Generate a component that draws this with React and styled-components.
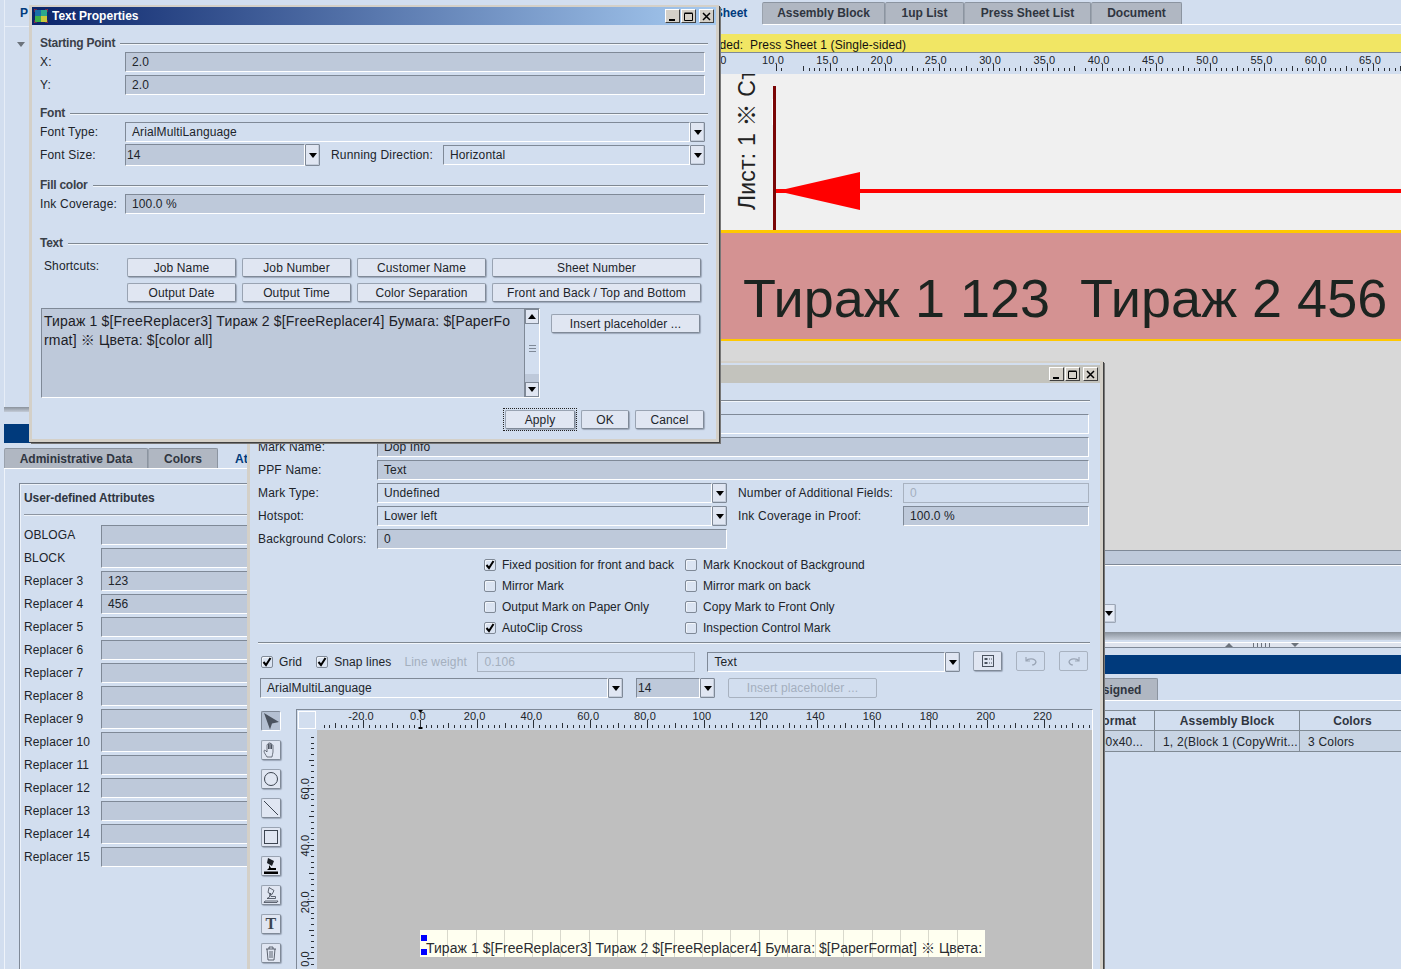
import React from "react";
import styled, { createGlobalStyle } from "styled-components";

const Global = createGlobalStyle`
  html, body { margin: 0; padding: 0; background: #d2deef; overflow: hidden; }
  * { box-sizing: border-box; }
  body { font-family: "Liberation Sans", "Noto Sans CJK SC", sans-serif; font-size: 12px; color: #20242a; letter-spacing: 0.12px; }
`;

const Desktop = styled.div`
  position: relative; width: 1401px; height: 969px; overflow: hidden; background: #d2deef;
  display: grid; grid-template-columns: 480px 921px;
`;

/* ---------- background application ---------- */
const LeftCol = styled.div`display: flex; flex-direction: column; height: 969px; overflow: hidden;`;
const RightCol = styled.div`display: flex; flex-direction: column; height: 969px; overflow: hidden;`;

const LeftTop = styled.div`
  height: 407px; margin-left: 4px; border-left: 1px solid #e6edf7; padding: 6px 0 0 15px; position: relative;
`;
const BlueLink = styled.div`font-weight: bold; color: #003a7c; height: 20px; line-height: 14px;`;
const HeadLine = styled.div`height: 1px; background: #e8eef8; margin: 0 0 15px -15px;`;
const Triangle = styled.div`
  width: 0; height: 0; margin-left: -3px;
  border-left: 4px solid transparent; border-right: 4px solid transparent; border-top: 5px solid #6c737c;
`;
const Shade = styled.div`
  height: ${p => p.$h || 6}px; margin-left: ${p => p.$ml || 0}px; flex: none;
  background: linear-gradient(#8a929c, #c4ccd8);
`;
const BlueBar = styled.div`
  height: 19px; background: #003a7c; margin-left: ${p => p.$ml || 0}px; margin-top: ${p => p.$mt || 0}px; flex: none;
`;
const TabRow = styled.div`
  display: flex; flex: none; height: ${p => p.$h}px; margin-top: ${p => p.$mt || 0}px; padding-left: ${p => p.$pl || 0}px;
  align-items: flex-end;
`;
const Tab = styled.div`
  width: ${p => p.$w}px; height: 100%; flex: none; font-weight: bold; letter-spacing: 0;
  text-align: ${p => p.$pad ? "left" : "center"}; padding-left: ${p => p.$pad || 0}px;
  line-height: ${p => p.$lh || 20}px; border: 1px solid #8b94a0; border-bottom: 0; border-left-color: #9aa2ad;
  border-radius: 2px 2px 0 0; background: ${p => p.$on ? "#d2deef" : "#b0b7c2"};
  color: ${p => p.$on ? "#003a7c" : "#2f3540"};
  ${p => p.$on ? "border-color: transparent;" : ""}
`;
const TabLine = styled.div`height: 1px; background: #fff; flex: none; margin-left: ${p => p.$ml || 0}px;`;

const LowerPane = styled.div`flex: 1; min-height: 0; margin-left: 4px; border-left: 1px solid #eef3fa; padding: 14px 0 0 14px;`;
const AttrBox = styled.div`
  border: 1px solid #7f8997; border-right: 0; border-bottom: 0; box-shadow: inset 1px 1px 0 #eef3fa; padding: 6px 0 0 4px; height: 500px;
`;
const AttrTitle = styled.div`font-weight: bold; color: #2f3540; line-height: 16px; height: 16px; letter-spacing: -0.1px;`;
const AttrSep = styled.div`height: 1px; background: #8d95a1; margin: 8px 0 10px 0; box-shadow: 0 1px 0 #eef3fa;`;
const AttrRow = styled.div`display: flex; align-items: center; height: 20px; margin-bottom: 3px;`;
const AttrLabel = styled.div`width: 77px; flex: none;`;

const Field = styled.div`
  height: ${p => p.$h || 20}px; width: ${p => p.$w ? p.$w + "px" : "auto"}; flex: ${p => p.$w ? "none" : 1};
  min-width: 0; border: 1px solid; border-color: #7f8997 #fff #fff #7f8997;
  padding-left: ${p => p.$pl ?? 6}px; line-height: ${p => (p.$h || 20) - 1}px; white-space: nowrap; overflow: hidden;
  background: ${p => p.$plain ? "#d2deef" : "#bec9da"}; color: ${p => p.$off ? "#a4afbe" : "#20242a"};
  ${p => p.$off ? "border-color: #a8b2c0;" : ""}
`;
const ArrowBox = styled.div`
  width: ${p => p.$w || 15}px; height: 100%; flex: none; display: flex; align-items: center; justify-content: center;
  background: #e0e6f2; border: 1px solid #7f8997; border-radius: 1px; box-shadow: inset -1px -1px 0 #c3ccda;
`;
const ArrowDown = styled.span`
  width: 0; height: 0; border-left: 4px solid transparent; border-right: 4px solid transparent; border-top: 5px solid #000;
`;
const ArrowUp = styled(ArrowDown)`border-top: 0; border-bottom: 5px solid #000;`;
const ComboWrap = styled.div`
  display: flex; height: ${p => p.$h || 20}px; width: ${p => p.$w ? p.$w + "px" : "auto"}; flex: ${p => p.$w ? "none" : 1}; min-width: 0;
  margin-left: ${p => p.$ml || 0}px;
`;
const Combo = ({ value, w, h, gray, pl, ml }) => (
  <ComboWrap $w={w} $h={h} $ml={ml}>
    <Field $plain={!gray} $h={h} $pl={pl}>{value}</Field>
    <ArrowBox><ArrowDown /></ArrowBox>
  </ComboWrap>
);

const Stage = styled.div`position: relative; height: 156px; background: #f0f0f0; overflow: hidden; flex: none;`;
const StageArt = styled.svg`display: block; width: 921px; height: 156px;`;
const Band = styled.div`
  flex: none; height: 111px; background: #d49292; border-top: 3px solid #ffc800; border-bottom: 2px solid #ffc800;
  padding-left: 263px; font-size: 54px; letter-spacing: 0; line-height: 131px; white-space: pre; overflow: hidden; color: #1c2420;
`;
const GrayPane = styled.div`height: 209px; background: #d8d8d8; flex: none;`;
const Strip = styled.div`height: 15px; flex: none; background: #bec9da; border-top: 1px solid #7f8997; border-bottom: 1px solid #7f8997;`;
const Yellow = styled.div`
  height: 19px; flex: none; margin-top: 9px; background: #f1e664; border-bottom: 1px solid #7f8997; padding-left: 219px; line-height: 22px; white-space: pre; color: #111;
`;
const RulerSvg = styled.svg`display: block; flex: none;`;
const SidePanel = styled.div`height: 67px; border-top: 1px solid #fff; padding: 38px 0 0 621px; flex: none;`;
const SmallArrow = styled(ArrowBox)`height: 19px; border-color: #9da7b6; background: #e4eaf5;`;
const SplitBar = styled.div`
  height: 6px; margin-top: 2px; flex: none; background: #dfe4ee; border-top: 1px solid #fff; border-bottom: 1px solid #7f8997;
  display: flex; justify-content: center; gap: 20px; align-items: center; padding-left: 642px;
`;
const MiniUp = styled.span`width: 0; height: 0; border-left: 4px solid transparent; border-right: 4px solid transparent; border-bottom: 4px solid #6c737c;`;
const MiniDown = styled(MiniUp)`border-bottom: 0; border-top: 4px solid #6c737c;`;
const Grip = styled.span`width: 18px; height: 4px; background: repeating-linear-gradient(90deg, #6c737c 0 1px, transparent 1px 4px);`;
const DataTable = styled.div`margin: 9px 0 0 597px; flex: none; display: grid; grid-template-columns: 78px 145px 106px; border-top: 1px solid #808a94;`;
const HeadCell = styled.div`
  height: 20px; line-height: 20px; text-align: center; font-weight: bold; color: #2f3540; border-right: 1px solid #808a94; border-bottom: 1px solid #808a94;
`;
const BodyCell = styled.div`
  height: 21px; line-height: 22px; padding-left: 8px; background: #c8d4e4; border-right: 1px solid #808a94; border-bottom: 1px solid #808a94; white-space: nowrap; overflow: hidden; letter-spacing: 0.2px;
`;

/* ---------- windows ---------- */
const Win = styled.div`
  position: absolute; left: ${p => p.$x}px; top: ${p => p.$y}px; width: ${p => p.$w}px; height: ${p => p.$h}px;
  background: #d2deef; border: 3px solid #d4d0c8; border-top-width: 2px; box-shadow: 1px 1px 0 #404040, 2px 2px 0 #777;
  display: flex; flex-direction: column; overflow: hidden;
`;
const TitleBar = styled.div`
  height: 18px; flex: none; display: flex; align-items: center; padding: 0 2px; gap: 4px; margin-top: ${p => p.$mt || 0}px;
  background: ${p => p.$active ? "linear-gradient(90deg, #0a246a, #a6caf0)" : "#c3c3bd"};
  color: #fff; font-weight: bold; font-size: 12px; letter-spacing: 0; white-space: nowrap;
`;
const TitleText = styled.div`flex: 1; overflow: hidden;`;
const WinBtn = styled.div`
  width: ${p => p.$w || 15}px; height: 14px; margin-left: ${p => p.$ml || 0}px; flex: none; background: #d4d0c8;
  border: 1px solid; border-color: #fff #404040 #404040 #fff; display: flex; align-items: center; justify-content: center;
`;
const WinBtnIcon = styled.svg`display: block; width: 9px; height: 9px;`;
const WinButtons = () => (
  <>
    <WinBtn><WinBtnIcon viewBox="0 0 9 9"><rect x="1" y="7" width="6" height="2" fill="#000" /></WinBtnIcon></WinBtn>
    <WinBtn $ml={-3}><WinBtnIcon viewBox="0 0 9 9"><path d="M0.5 1.5h8v7h-8z M0.5 1h8" fill="none" stroke="#000" /></WinBtnIcon></WinBtn>
    <WinBtn $ml={-1}><WinBtnIcon viewBox="0 0 9 9"><path d="M1 1l7 7M8 1l-7 7" stroke="#000" strokeWidth="1.5" /></WinBtnIcon></WinBtn>
  </>
);
const DlgBody = styled.div`flex: 1; padding: 0 11px 0 8px; display: flex; flex-direction: column; min-height: 0;`;
const SecHead = styled.div`
  display: flex; align-items: center; gap: 5px; height: 14px; margin-top: ${p => p.$mt}px; margin-bottom: 2px; margin-right: -3px;
  font-weight: bold; color: #3a4048; white-space: nowrap; letter-spacing: -0.25px;
`;
const SecLine = styled.div`flex: 1; height: 1px; background: #7f8892; box-shadow: 0 1px 0 #f2f6fb;`;
const FormRow = styled.div`display: flex; align-items: center; height: ${p => p.$h || 20}px; margin-bottom: ${p => p.$mb ?? 3}px; flex: none;`;
const FormLabel = styled.div`width: ${p => p.$w}px; margin-left: ${p => p.$ml || 0}px; flex: none; white-space: nowrap; letter-spacing: 0.18px; color: ${p => p.$off ? "#a4afbe" : "inherit"};`;
const ShortcutArea = styled.div`display: flex; margin: 6px 0 6px;`;
const ShortcutLabel = styled.div`width: 83px; margin-left: 4px; flex: none; padding-top: 1px;`;
const ShortcutGrid = styled.div`display: grid; grid-template-columns: 109px 109px 129px 209px; gap: 6px;`;
const Btn = styled.div`
  height: ${p => p.$h || 19}px; width: ${p => p.$w ? p.$w + "px" : "auto"}; margin-left: ${p => p.$ml || 0}px; margin-top: ${p => p.$mt || 0}px; flex: none;
  background: #e0e6f2; border: 1px solid #99a3b2; border-right-color: #7f8997; border-bottom-color: #7f8997; border-radius: 2px;
  box-shadow: 1px 1px 1px rgba(60, 70, 85, 0.35); text-align: center; line-height: ${p => (p.$h || 19) - 1}px; white-space: nowrap;
`;
const FocusBox = styled.div`outline: 1px dotted #222; outline-offset: 1px;`;
const OffBtn = styled(Btn)`box-shadow: none; background: #d2deef; border-color: #a8b2c0; color: #a4afbe;`;
const TextRow = styled.div`display: flex; align-items: flex-start; margin-left: 1px; flex: none;`;
const TextBox = styled.div`
  width: 499px; height: 90px; display: flex; background: #bec9da; border: 1px solid; border-color: #7f8997 #fff #fff #7f8997;
`;
const TextContent = styled.div`flex: 1; padding: 3px 2px; font-size: 14px; line-height: 19px; letter-spacing: 0.16px; white-space: pre; overflow: hidden; color: #1c2026;`;
const Scroll = styled.div`width: 15px; flex: none; display: flex; flex-direction: column; background: #d2deef; border-left: 1px solid #7f8997;`;
const ScrollBtn = styled.div`height: 15px; flex: none; background: #e0e6f2; border: 1px solid #7f8997; display: flex; align-items: center; justify-content: center;`;
const ScrollThumb = styled.div`flex: 1; display: flex; align-items: center; justify-content: center;`;
const ThumbGrip = styled.div`width: 7px; height: 9px; background: repeating-linear-gradient(#7f8997 0 1px, transparent 1px 3px);`;
const ScrollTrack = styled.div`height: 8px; flex: none; background: #bec9da;`;
const Footer = styled.div`display: flex; justify-content: flex-end; gap: 6px; margin: 12px 1px 0 0; flex: none;`;

/* mark window */
const MarkBody = styled.div`flex: 1; padding: 0 11px 0 8px; display: flex; flex-direction: column; min-height: 0;`;
const MarkTopLine = styled.div`height: 1px; margin: 17px -1px 13px 0; flex: none; background: #7f8892; box-shadow: 0 1px 0 #f2f6fb;`;
const CheckGrid = styled.div`
  display: grid; grid-template-columns: 201px 1fr; grid-auto-rows: 21px; padding: 3px 0 0 226px; flex: none; letter-spacing: 0.04px;
`;
const CheckItem = styled.label`display: flex; align-items: center; gap: 6px; white-space: nowrap; margin-left: ${p => p.$ml || 0}px; color: inherit;`;
const CheckSquare = styled.span`
  width: 12px; height: 12px; flex: none; border: 1px solid #7f8997; border-radius: 2px; background: #dbe4f2; display: flex; align-items: center; justify-content: center;
  box-shadow: inset 1px 1px 0 #f2f6fb;
`;
const CheckMark = styled.svg`display: block; width: 10px; height: 10px;`;
const Check = ({ on, label, ml }) => (
  <CheckItem $ml={ml}>
    <CheckSquare>
      {on && <CheckMark viewBox="0 0 10 10"><path d="M1.5 5l2.5 3 4.5-7" fill="none" stroke="#000" strokeWidth="2" /></CheckMark>}
    </CheckSquare>
    {label}
  </CheckItem>
);
const MarkSep = styled.div`height: 1px; flex: none; margin: 4px -1px 9px 0; background: #7f8892; box-shadow: 0 1px 0 #f2f6fb;`;
const ToolRow = styled.div`display: flex; align-items: center; height: 20px; flex: none; margin-bottom: ${p => p.$mb || 0}px;`;
const IconBtn = styled(Btn)`height: 20px; width: 29px; display: flex; align-items: center; justify-content: center; margin-top: -2px;`;
const OffIconBtn = styled(IconBtn)`background: #d2deef; box-shadow: none; border-color: #a8b2c0;`;
const CanvasRow = styled.div`display: flex; flex: 1; min-height: 0; margin-top: 11px;`;
const ToolCol = styled.div`display: flex; flex-direction: column; gap: 9px; width: 20px; margin: 2px 15px 0 3px; flex: none;`;
const ToolBtn = styled.div`
  width: 20px; height: 20px; flex: none; display: flex; align-items: center; justify-content: center;
  background: ${p => p.$on ? "#b4c0d2" : "#e0e6f2"}; border: 1px solid #99a3b2; border-right-color: #7f8997; border-bottom-color: #7f8997; border-radius: 2px;
  ${p => p.$on ? "border-color: #7f8997 #fff #fff #7f8997;" : "box-shadow: 1px 1px 1px rgba(60, 70, 85, 0.35);"}
  font: bold 16px "Liberation Serif", serif; color: #3c4450;
`;
const ToolIcon = styled.svg`display: block; width: 18px; height: 18px;`;
const RulerGrid = styled.div`
  flex: 1; margin-right: -3px; display: grid; grid-template-columns: 20px 1fr; grid-template-rows: 20px 1fr; min-height: 0;
  border-top: 1px solid #7f8997; border-left: 1px solid #7f8997; border-right: 1px solid #fff;
`;
const Corner = styled.div`background: #d2deef; border: 1px solid #fff; outline: 1px solid #d2deef; margin: 1px;`;
const GrayCanvas = styled.div`position: relative; background: #bfbfbf; overflow: hidden;`;
const TextStrip = styled.div`
  position: absolute; left: 103px; top: 200px; width: 565px; height: 27px; overflow: hidden; white-space: pre;
  padding-left: 6px; font-size: 14px; letter-spacing: 0.05px; line-height: 37px; color: #2a2c30;
  background: repeating-linear-gradient(90deg, #fffff0 0 27.3px, #d9d9cc 27.3px 28.3px);
`;
const Handle = styled.div`
  position: absolute; left: ${p => p.$x}px; top: ${p => p.$y}px; width: 6px; height: 6px; background: #0000ff;
`;

/* ---------- drawings ---------- */
const TK = "#2a2f36";
function TopRuler() {
  const ticks = [];
  for (let i = 0; i < 116; i++) {
    const x = 296 + 5.427 * i;
    const gap = (x > 302 && x < 323) || (x > 596 && x < 605);
    if (gap) continue;
    const h = i % 10 === 0 ? 7 : i % 5 === 0 ? 5 : 3;
    ticks.push(<line key={i} x1={Math.round(x) + 0.5} x2={Math.round(x) + 0.5} y1={18 - h} y2={18} stroke={TK} />);
  }
  const labels = [];
  for (let k = -1; k < 12; k++) {
    labels.push(<text key={k} x={293 + 54.27 * k} y={11} textAnchor="middle" fontSize="11" fill="#20242a" fontFamily="Liberation Sans">{(10 + 5 * k).toFixed(1)}</text>);
  }
  return <RulerSvg width="921" height="21" viewBox="0 0 921 21">{ticks}{labels}</RulerSvg>;
}
function MarkTopRuler() {
  const ticks = [];
  for (let i = -17; i < 120; i++) {
    const x = 103 + 5.67 * i;
    const h = i % 10 === 0 ? 8 : i % 5 === 0 ? 5 : 3;
    ticks.push(<line key={i} x1={Math.round(x) + 0.5} x2={Math.round(x) + 0.5} y1={18 - h} y2={18} stroke={TK} />);
  }
  const vals = ["-20.0", "0.0", "20.0", "40.0", "60.0", "80.0", "100", "120", "140", "160", "180", "200", "220"];
  const labels = vals.map((v, k) => (
    <text key={v} x={44 + 56.8 * k} y={10} textAnchor="middle" fontSize="11" fill="#20242a" fontFamily="Liberation Sans">{v}</text>
  ));
  return (
    <RulerSvg width="775" height="20" viewBox="0 0 775 20">
      {ticks}{labels}
      <path d="M101 0h5l-2.500 3zM101.500 17h4v2h-4z" fill="#000" />
    </RulerSvg>
  );
}
function MarkLeftRuler() {
  const ticks = [];
  for (let i = -1; i < 40; i++) {
    const y = 228 - 5.67 * i;
    const w = i % 10 === 0 ? 7 : i % 5 === 0 ? 5 : 3;
    ticks.push(<line key={i} x1={17 - w} x2={17} y1={Math.round(y) + 0.5} y2={Math.round(y) + 0.5} stroke={TK} />);
  }
  const labels = ["0.0", "20.0", "40.0", "60.0"].map((v, k) => {
    const y = 229 - 56.7 * k;
    return <text key={v} transform={`translate(12 ${y}) rotate(-90)`} textAnchor="middle" fontSize="11" fill="#20242a" fontFamily="Liberation Sans">{v}</text>;
  });
  return <RulerSvg width="20" height="240" viewBox="0 0 20 240">{ticks}{labels}</RulerSvg>;
}
const AppIcon = styled.svg`display: block; width: 14px; height: 14px; flex: none;`;
const TitleIcon = () => (
  <AppIcon viewBox="0 0 14 14">
    <rect x="1" y="1" width="6" height="6" fill="#1a6ea8" />
    <rect x="7" y="1" width="6" height="6" fill="#2ba88c" />
    <rect x="1" y="7" width="6" height="6" fill="#3cae4c" />
    <rect x="7" y="7" width="6" height="6" fill="#c8c83c" />
    <path d="M0 3V0h3M11 0h3v3M14 11v3h-3M3 14H0v-3" fill="none" stroke="#c03030" />
  </AppIcon>
);

const attrs = ["OBLOGA", "BLOCK", "Replacer 3", "Replacer 4", "Replacer 5", "Replacer 6", "Replacer 7", "Replacer 8", "Replacer 9", "Replacer 10", "Replacer 11", "Replacer 12", "Replacer 13", "Replacer 14", "Replacer 15"];
const attrVals = { "Replacer 3": "123", "Replacer 4": "456" };

const Tools = () => (
  <ToolCol>
    <ToolBtn $on><ToolIcon viewBox="0 0 18 18"><path d="M2 1l15 9-7 1.500-2 6z" fill="#4a525e" /></ToolIcon></ToolBtn>
    <ToolBtn><ToolIcon viewBox="0 0 18 18"><path d="M5 16c-1-2-3-4-3-6 0-1 1-1 2 0l1 1V4c0-1 1.500-1 1.500 0v4-5.500c0-1 1.500-1 1.500 0V8V3c0-1 1.500-1 1.500 0v5-3.500c0-1 1.500-1 1.500 0V11c0 2-1 3-1 5z" fill="none" stroke="#3c4450" strokeWidth="0.7" /></ToolIcon></ToolBtn>
    <ToolBtn><ToolIcon viewBox="0 0 18 18"><circle cx="9" cy="9" r="6.500" fill="none" stroke="#3c4450" /></ToolIcon></ToolBtn>
    <ToolBtn><ToolIcon viewBox="0 0 18 18"><path d="M2 2l14 14" stroke="#3c4450" /></ToolIcon></ToolBtn>
    <ToolBtn><ToolIcon viewBox="0 0 18 18"><rect x="2.500" y="2.500" width="13" height="13" fill="none" stroke="#3c4450" /></ToolIcon></ToolBtn>
    <ToolBtn><ToolIcon viewBox="0 0 18 18"><path d="M6 1l6 3-2 5-5-3z" fill="#1c2026" /><path d="M7 8l2 3h5v2H5l2-2z M2 14.500h14V17H2z" fill="#000" /></ToolIcon></ToolBtn>
    <ToolBtn><ToolIcon viewBox="0 0 18 18"><path d="M7 1.500l5 3-2 4-4-2z M8 7l1 3.500h4.500v2H5l2.500-1.500z M3 15h13l-1 1.500H2z" fill="none" stroke="#3c4450" strokeWidth="0.8" /></ToolIcon></ToolBtn>
    <ToolBtn>T</ToolBtn>
    <ToolBtn><ToolIcon viewBox="0 0 18 18"><path d="M4 5h10M7 5V3h4v2M5 5l1 11h6l1-11M8 7v7M10 7v7" fill="none" stroke="#3c4450" strokeWidth="0.8" /></ToolIcon></ToolBtn>
  </ToolCol>
);

export default function App() {
  return (
    <>
      <Global />
      <Desktop>
        <LeftCol>
          <LeftTop>
            <BlueLink>P</BlueLink>
            <HeadLine />
            <Triangle />
          </LeftTop>
          <Shade $ml={4} $h={5} />
          <BlueBar $ml={4} $mt={12} />
          <TabRow $h={20} $mt={5} $pl={4}>
            <Tab $w={144}>Administrative Data</Tab>
            <Tab $w={70}>Colors</Tab>
            <Tab $w={94} $pad={16} $on>At</Tab>
          </TabRow>
          <TabLine $ml={4} />
          <LowerPane>
            <AttrBox>
              <AttrTitle>User-defined Attributes</AttrTitle>
              <AttrSep />
              {attrs.map(a => (
                <AttrRow key={a}>
                  <AttrLabel>{a}</AttrLabel>
                  <Field>{attrVals[a] || ""}</Field>
                </AttrRow>
              ))}
            </AttrBox>
          </LowerPane>
        </LeftCol>

        <RightCol>
          <TabRow $h={22} $mt={2} $pl={184}>
            <Tab $w={98} $on>Press Sheet</Tab>
            <Tab $w={123}>Assembly Block</Tab>
            <Tab $w={79}>1up List</Tab>
            <Tab $w={127}>Press Sheet List</Tab>
            <Tab $w={91}>Document</Tab>
          </TabRow>
          <TabLine $ml={283} />
          <Yellow>{"Loaded:  Press Sheet 1 (Single-sided)"}</Yellow>
          <TopRuler />
          <Stage>
            <StageArt viewBox="0 0 921 156">
              <text transform="translate(275 136) rotate(-90)" fontSize="23" fontFamily="Liberation Sans, Noto Sans CJK SC, sans-serif" fill="#222" letterSpacing="0.2">Лист: 1 ※ Ст</text>
              <rect x="293" y="12" width="3" height="144" fill="#7a0606" />
              <rect x="292" y="25" width="1" height="26" fill="#fff" />
              <rect x="296" y="115" width="625" height="4" fill="#ff0000" />
              <path d="M297 117L380 98V136z" fill="#ff0000" />
            </StageArt>
          </Stage>
          <Band>{"Тираж 1 123  Тираж 2 456"}</Band>
          <GrayPane />
          <Strip />
          <SidePanel><SmallArrow><ArrowDown /></SmallArrow></SidePanel>
          <Shade $h={8} />
          <SplitBar><MiniUp /><Grip /><MiniDown /></SplitBar>
          <BlueBar $mt={7} />
          <TabRow $h={22} $mt={4} $pl={568}>
            <Tab $w={110} $lh={22}>Not Assigned</Tab>
          </TabRow>
          <TabLine />
          <DataTable>
            <HeadCell>Format</HeadCell><HeadCell>Assembly Block</HeadCell><HeadCell>Colors</HeadCell>
            <BodyCell>1280x40...</BodyCell><BodyCell>1, 2(Block 1 (CopyWrit...</BodyCell><BodyCell>3 Colors</BodyCell>
          </DataTable>
        </RightCol>

        <Win $x={247} $y={361} $w={856} $h={620}>
          <TitleBar $mt={2}>
            <TitleText />
            <WinButtons />
          </TitleBar>
          <MarkBody>
            <MarkTopLine />
            <FormRow>
              <FormLabel $w={119}>Mark Set:</FormLabel>
              <Field $plain />
            </FormRow>
            <FormRow>
              <FormLabel $w={119}>Mark Name:</FormLabel>
              <Field>Dop Info</Field>
            </FormRow>
            <FormRow>
              <FormLabel $w={119}>PPF Name:</FormLabel>
              <Field>Text</Field>
            </FormRow>
            <FormRow>
              <FormLabel $w={119}>Mark Type:</FormLabel>
              <Combo value="Undefined" w={350} />
              <FormLabel $w={165} $ml={11}>Number of Additional Fields:</FormLabel>
              <Field $plain $off>0</Field>
            </FormRow>
            <FormRow>
              <FormLabel $w={119}>Hotspot:</FormLabel>
              <Combo value="Lower left" w={350} />
              <FormLabel $w={165} $ml={11}>Ink Coverage in Proof:</FormLabel>
              <Field>100.0 %</Field>
            </FormRow>
            <FormRow $mb={2}>
              <FormLabel $w={119}>Background Colors:</FormLabel>
              <Field $w={350}>0</Field>
            </FormRow>
            <CheckGrid>
              <Check on label="Fixed position for front and back" />
              <Check label="Mark Knockout of Background" />
              <Check label="Mirror Mark" />
              <Check label="Mirror mark on back" />
              <Check label="Output Mark on Paper Only" />
              <Check label="Copy Mark to Front Only" />
              <Check on label="AutoClip Cross" />
              <Check label="Inspection Control Mark" />
            </CheckGrid>
            <MarkSep />
            <ToolRow $mb={6}>
              <Check on label="Grid" ml={3} />
              <Check on label="Snap lines" ml={14} />
              <FormLabel $w={73} $ml={13} $off>Line weight</FormLabel>
              <Field $w={218} $plain $off>0.106</Field>
              <Combo value="Text" w={253} ml={12} />
              <IconBtn $ml={13}>
                <svg width="14" height="14" viewBox="0 0 14 14"><rect x="1.500" y="1.500" width="11" height="11" fill="none" stroke="#4a525e" /><path d="M3.500 4h3v2h-3zM3.500 8h3v2h-3z" fill="#4a525e" /><path d="M8 5h3M8 9h3" stroke="#4a525e" strokeDasharray="1 1" /></svg>
              </IconBtn>
              <OffIconBtn $ml={14}>
                <svg width="16" height="12" viewBox="0 0 16 12"><path d="M3 2v4h4M3 6c2-3 9-3 10 1-.5 2-2 3-4 3" fill="none" stroke="#9aa5b5" strokeWidth="1.200" /></svg>
              </OffIconBtn>
              <OffIconBtn $ml={14}>
                <svg width="16" height="12" viewBox="0 0 16 12"><path d="M13 2v4H9M13 6c-2-3-9-3-10 1 .5 2 2 3 4 3" fill="none" stroke="#9aa5b5" strokeWidth="1.200" /></svg>
              </OffIconBtn>
            </ToolRow>
            <ToolRow>
              <Combo value="ArialMultiLanguage" w={363} ml={2} />
              <Combo value="14" w={79} ml={13} gray pl={1} />
              <OffBtn $w={149} $h={20} $ml={13}>Insert placeholder ...</OffBtn>
            </ToolRow>
            <CanvasRow>
              <Tools />
              <RulerGrid>
                <Corner />
                <MarkTopRuler />
                <MarkLeftRuler />
                <GrayCanvas>
                  <TextStrip>{"Тираж 1 $[FreeReplacer3] Тираж 2 $[FreeReplacer4] Бумага: $[PaperFormat] ※ Цвета: $[color all]"}</TextStrip>
                  <Handle $x={104} $y={205} />
                  <Handle $x={104} $y={219} />
                </GrayCanvas>
              </RulerGrid>
            </CanvasRow>
          </MarkBody>
        </Win>

        <Win $x={29} $y={5} $w={690} $h={437}>
          <TitleBar $active>
            <TitleIcon />
            <TitleText>Text Properties</TitleText>
            <WinButtons />
          </TitleBar>
          <DlgBody>
            <SecHead $mt={11}>Starting Point<SecLine /></SecHead>
            <FormRow><FormLabel $w={85}>X:</FormLabel><Field>2.0</Field></FormRow>
            <FormRow $mb={0}><FormLabel $w={85}>Y:</FormLabel><Field>2.0</Field></FormRow>
            <SecHead $mt={11}>Font<SecLine /></SecHead>
            <FormRow $mb={2}><FormLabel $w={85}>Font Type:</FormLabel><Combo value="ArialMultiLanguage" /></FormRow>
            <FormRow $h={22} $mb={0}>
              <FormLabel $w={85}>Font Size:</FormLabel>
              <Combo value="14" w={195} h={22} gray pl={1} />
              <FormLabel $w={112} $ml={11}>Running Direction:</FormLabel>
              <Combo value="Horizontal" />
            </FormRow>
            <SecHead $mt={12}>Fill color<SecLine /></SecHead>
            <FormRow $mb={0}><FormLabel $w={85}>Ink Coverage:</FormLabel><Field>100.0 %</Field></FormRow>
            <SecHead $mt={22}>Text<SecLine /></SecHead>
            <ShortcutArea>
              <ShortcutLabel>Shortcuts:</ShortcutLabel>
              <ShortcutGrid>
                <Btn>Job Name</Btn><Btn>Job Number</Btn><Btn>Customer Name</Btn><Btn>Sheet Number</Btn>
                <Btn>Output Date</Btn><Btn>Output Time</Btn><Btn>Color Separation</Btn><Btn>Front and Back / Top and Bottom</Btn>
              </ShortcutGrid>
            </ShortcutArea>
            <TextRow>
              <TextBox>
                <TextContent>{"Тираж 1 $[FreeReplacer3] Тираж 2 $[FreeReplacer4] Бумага: $[PaperFo\nrmat] ※ Цвета: $[color all]"}</TextContent>
                <Scroll>
                  <ScrollBtn><ArrowUp /></ScrollBtn>
                  <ScrollThumb><ThumbGrip /></ScrollThumb>
                  <ScrollTrack />
                  <ScrollBtn><ArrowDown /></ScrollBtn>
                </Scroll>
              </TextBox>
              <Btn $w={149} $ml={11} $mt={6}>Insert placeholder ...</Btn>
            </TextRow>
            <Footer>
              <FocusBox><Btn $w={70}>Apply</Btn></FocusBox>
              <Btn $w={48}>OK</Btn>
              <Btn $w={69}>Cancel</Btn>
            </Footer>
          </DlgBody>
        </Win>
      </Desktop>
    </>
  );
}
